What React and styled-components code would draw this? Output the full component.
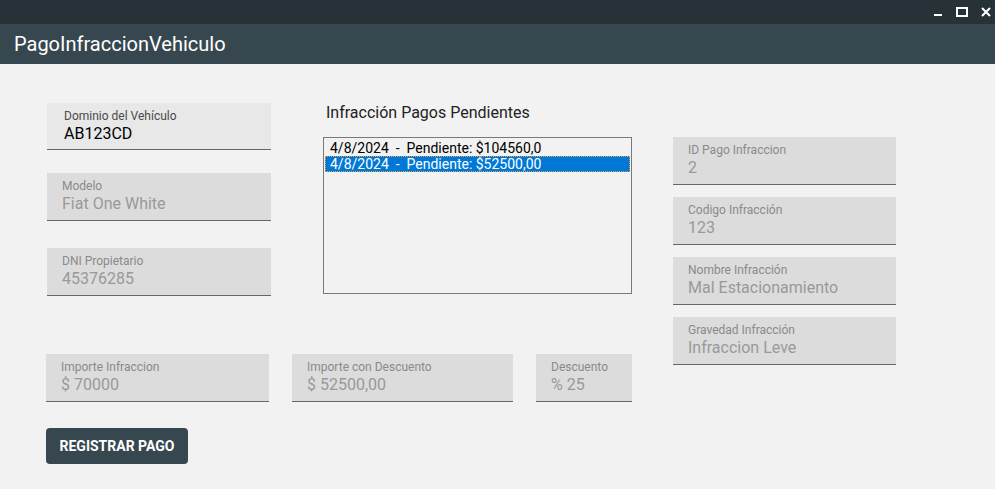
import React from 'react';
import styled, { createGlobalStyle } from 'styled-components';

const GlobalStyle = createGlobalStyle`
  html, body {
    margin: 0;
    padding: 0;
    background: #f2f2f2;
  }
  * {
    box-sizing: border-box;
  }
`;

const Window = styled.div`
  width: 995px;
  height: 489px;
  display: flex;
  flex-direction: column;
  font-family: 'Roboto', 'Liberation Sans', sans-serif;
  background: #f2f2f2;
  overflow: hidden;
`;

const TitleBar = styled.div`
  height: 24px;
  background: #263238;
  display: flex;
  justify-content: flex-end;
  align-items: center;
  padding-right: 0;
  gap: 6px;
`;

const WinButton = styled.div`
  width: 18px;
  height: 24px;
  display: flex;
  align-items: center;
  justify-content: center;
`;

const Header = styled.div`
  height: 40px;
  background: #37474f;
  display: flex;
  align-items: center;
  padding-left: 14px;
`;

const HeaderTitle = styled.h1`
  margin: 0;
  font-size: 20px;
  font-weight: 400;
  color: #ffffff;
  line-height: 24px;
`;

const Content = styled.div`
  flex: 1;
  display: flex;
  align-items: flex-start;
  padding: 39px 0 0 46px;
`;

const LeftArea = styled.div`
  display: flex;
  flex-direction: column;
  width: 586px;
`;

const TopRow = styled.div`
  display: flex;
  align-items: flex-start;
`;

const LeftCol = styled.div`
  display: flex;
  flex-direction: column;
  width: 224px;
  margin-left: 1px;
`;

const MidCol = styled.div`
  display: flex;
  flex-direction: column;
  width: 309px;
  margin-left: 52px;
`;

const RightCol = styled.div`
  display: flex;
  flex-direction: column;
  gap: 12px;
  width: 223px;
  margin-left: 41px;
  margin-top: 34px;
`;

const BottomRow = styled.div`
  display: flex;
  gap: 23px;
  margin-top: 58px;
`;

const FieldBox = styled.div`
  width: ${(p) => p.$w || '100%'};
  height: ${(p) => (p.$enabled ? 47 : 48)}px;
  margin-top: ${(p) => p.$mt || 0}px;
  background: ${(p) => (p.$enabled ? '#e8e8e8' : '#dcdcdc')};
  border-bottom: 1px solid #666666;
  padding: 6px 0 0 ${(p) => (p.$enabled ? 17 : 15)}px;
  flex-shrink: 0;
`;

const FieldLabel = styled.div`
  font-size: 12px;
  line-height: 14px;
  color: ${(p) => (p.$enabled ? '#4a4a4a' : '#8a8a8a')};
`;

const FieldValue = styled.div`
  margin-top: 1px;
  font-size: 16px;
  line-height: 19px;
  color: ${(p) => (p.$enabled ? '#000000' : '#999999')};
`;

const ListTitle = styled.div`
  font-size: 16px;
  line-height: 19px;
  color: #222222;
  padding-left: 3px;
`;

const ListBox = styled.div`
  margin-top: 15px;
  height: 157px;
  border: 1px solid #7a7a7a;
  background: #f2f2f2;
  padding: 2px 1px;
`;

const ListItem = styled.div`
  height: 16px;
  line-height: 16px;
  font-size: 14px;
  padding-left: 5px;
  white-space: pre;
  color: ${(p) => (p.$selected ? '#ffffff' : '#000000')};
  background: ${(p) => (p.$selected ? '#0078d7' : 'transparent')};
  outline: ${(p) => (p.$selected ? '1px dotted #e8a040' : 'none')};
  outline-offset: -1px;
`;

const Button = styled.button`
  margin-top: 26px;
  width: 142px;
  height: 36px;
  border: none;
  border-radius: 4px;
  background: #37474f;
  color: #ffffff;
  font-family: 'Roboto', 'Liberation Sans', sans-serif;
  font-size: 14px;
  font-weight: 700;
  padding: 0;
  cursor: pointer;
`;

const Field = ({ label, value, enabled, mt, w }) => (
  <FieldBox $enabled={enabled} $mt={mt} $w={w}>
    <FieldLabel $enabled={enabled}>{label}</FieldLabel>
    <FieldValue $enabled={enabled}>{value}</FieldValue>
  </FieldBox>
);

const pagos = [
  '4/8/2024  -  Pendiente: $104560,0',
  '4/8/2024  -  Pendiente: $52500,00',
];

export default function App() {
  return (
    <Window>
      <GlobalStyle />
      <TitleBar>
        <WinButton>
          <svg width="10" height="10" viewBox="0 0 10 10">
            <rect x="1" y="7" width="8" height="2" fill="#fff" />
          </svg>
        </WinButton>
        <WinButton>
          <svg width="12" height="10" viewBox="0 0 12 10">
            <rect x="1" y="1" width="10" height="8" fill="none" stroke="#fff" strokeWidth="2" />
          </svg>
        </WinButton>
        <WinButton>
          <svg width="10" height="10" viewBox="0 0 10 10">
            <path d="M1 1 L9 9 M9 1 L1 9" stroke="#fff" strokeWidth="2" />
          </svg>
        </WinButton>
      </TitleBar>
      <Header>
        <HeaderTitle>PagoInfraccionVehiculo</HeaderTitle>
      </Header>
      <Content>
        <LeftArea>
          <TopRow>
            <LeftCol>
              <Field label="Dominio del Vehículo" value="AB123CD" enabled />
              <Field label="Modelo" value="Fiat One White" mt={23} />
              <Field label="DNI Propietario" value="45376285" mt={27} />
            </LeftCol>
            <MidCol>
              <ListTitle>Infracción Pagos Pendientes</ListTitle>
              <ListBox>
                {pagos.map((p, i) => (
                  <ListItem key={i} $selected={i === 1}>
                    {p}
                  </ListItem>
                ))}
              </ListBox>
            </MidCol>
          </TopRow>
          <BottomRow>
            <Field label="Importe Infraccion" value="$ 70000" w="223px" />
            <Field label="Importe con Descuento" value="$ 52500,00" w="221px" />
            <Field label="Descuento" value="% 25" w="96px" />
          </BottomRow>
          <Button>REGISTRAR PAGO</Button>
        </LeftArea>
        <RightCol>
          <Field label="ID Pago Infraccion" value="2" />
          <Field label="Codigo Infracción" value="123" />
          <Field label="Nombre Infracción" value="Mal Estacionamiento" />
          <Field label="Gravedad Infracción" value="Infraccion Leve" />
        </RightCol>
      </Content>
    </Window>
  );
}
